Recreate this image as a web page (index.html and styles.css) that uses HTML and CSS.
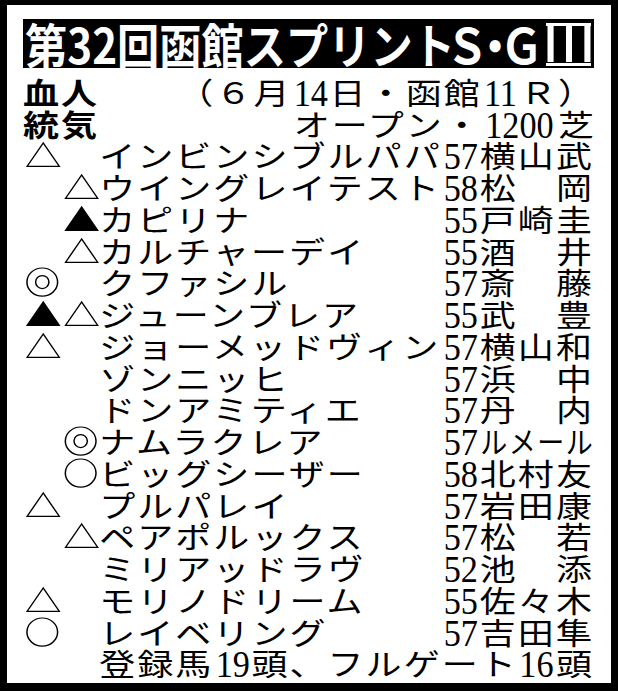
FILE: index.html
```html
<!DOCTYPE html>
<html lang="ja">
<head>
<meta charset="utf-8">
<title>第32回函館スプリントＳ・ＧⅢ</title>
<link rel="stylesheet" href="styles.css">
</head>
<body>
<div class="sheet">
  <div class="title"><span class="title-main"><span class="title-text">第32回函館スプリント</span></span><span class="tc tc-s">Ｓ</span><span class="tc tc-dot">・</span><span class="tc tc-g">Ｇ</span><span class="tc-roman"><span class="roman-glyph">Ⅲ</span></span></div>
  <div class="body">
    <div class="head">
      <span class="label">血人</span>
      <span class="info">（６月<span class="num">14</span>日・函館<span class="num">11</span>Ｒ）</span>
    </div>
    <div class="head">
      <span class="label">統気</span>
      <span class="info">オープン・<span class="num num-wide">1200</span>芝</span>
    </div>

    <div class="entry">
      <span class="mk"><svg viewBox="0 0 32 32"><path class="tri" d="M17 4 L3.5 27.5 L30.5 27.5 Z"/></svg></span>
      <span class="mk"></span>
      <span class="name">インビンシブルパパ</span>
      <span class="wt"><span class="num">57</span></span>
      <span class="jk">横山武</span>
    </div>
    <div class="entry">
      <span class="mk"></span>
      <span class="mk"><svg viewBox="0 0 32 32"><path class="tri" d="M17 4 L3.5 27.5 L30.5 27.5 Z"/></svg></span>
      <span class="name">ウイングレイテスト</span>
      <span class="wt"><span class="num">58</span></span>
      <span class="jk">松　岡</span>
    </div>
    <div class="entry">
      <span class="mk"></span>
      <span class="mk"><svg viewBox="0 0 32 32"><path class="tri-fill" d="M17 4 L3.5 27.5 L30.5 27.5 Z"/></svg></span>
      <span class="name">カピリナ</span>
      <span class="wt"><span class="num">55</span></span>
      <span class="jk">戸崎圭</span>
    </div>
    <div class="entry">
      <span class="mk"></span>
      <span class="mk"><svg viewBox="0 0 32 32"><path class="tri" d="M17 4 L3.5 27.5 L30.5 27.5 Z"/></svg></span>
      <span class="name">カルチャーデイ</span>
      <span class="wt"><span class="num">55</span></span>
      <span class="jk">酒　井</span>
    </div>
    <div class="entry">
      <span class="mk"><svg viewBox="0 0 32 32"><ellipse class="ring" cx="16.2" cy="16.2" rx="12.9" ry="14.2"/><ellipse class="ring" cx="16.2" cy="16.2" rx="5.6" ry="6.6"/></svg></span>
      <span class="mk"></span>
      <span class="name">クファシル</span>
      <span class="wt"><span class="num">57</span></span>
      <span class="jk">斎　藤</span>
    </div>
    <div class="entry">
      <span class="mk"><svg viewBox="0 0 32 32"><path class="tri-fill" d="M17 4 L3.5 27.5 L30.5 27.5 Z"/></svg></span>
      <span class="mk"><svg viewBox="0 0 32 32"><path class="tri" d="M17 4 L3.5 27.5 L30.5 27.5 Z"/></svg></span>
      <span class="name">ジューンブレア</span>
      <span class="wt"><span class="num">55</span></span>
      <span class="jk">武　豊</span>
    </div>
    <div class="entry">
      <span class="mk"><svg viewBox="0 0 32 32"><path class="tri" d="M17 4 L3.5 27.5 L30.5 27.5 Z"/></svg></span>
      <span class="mk"></span>
      <span class="name">ジョーメッドヴィン</span>
      <span class="wt"><span class="num">57</span></span>
      <span class="jk">横山和</span>
    </div>
    <div class="entry">
      <span class="mk"></span>
      <span class="mk"></span>
      <span class="name">ゾンニッヒ</span>
      <span class="wt"><span class="num">57</span></span>
      <span class="jk">浜　中</span>
    </div>
    <div class="entry">
      <span class="mk"></span>
      <span class="mk"></span>
      <span class="name">ドンアミティエ</span>
      <span class="wt"><span class="num">57</span></span>
      <span class="jk">丹　内</span>
    </div>
    <div class="entry">
      <span class="mk"></span>
      <span class="mk"><svg viewBox="0 0 32 32"><ellipse class="ring" cx="16.2" cy="16.2" rx="12.9" ry="14.2"/><ellipse class="ring" cx="16.2" cy="16.2" rx="5.6" ry="6.6"/></svg></span>
      <span class="name">ナムラクレア</span>
      <span class="wt"><span class="num">57</span></span>
      <span class="jk"><span class="squeeze">ルメール</span></span>
    </div>
    <div class="entry">
      <span class="mk"></span>
      <span class="mk"><svg viewBox="0 0 32 32"><ellipse class="ring" cx="16.2" cy="16.2" rx="12.9" ry="14.2"/></svg></span>
      <span class="name">ビッグシーザー</span>
      <span class="wt"><span class="num">58</span></span>
      <span class="jk">北村友</span>
    </div>
    <div class="entry">
      <span class="mk"><svg viewBox="0 0 32 32"><path class="tri" d="M17 4 L3.5 27.5 L30.5 27.5 Z"/></svg></span>
      <span class="mk"></span>
      <span class="name">プルパレイ</span>
      <span class="wt"><span class="num">57</span></span>
      <span class="jk">岩田康</span>
    </div>
    <div class="entry">
      <span class="mk"></span>
      <span class="mk"><svg viewBox="0 0 32 32"><path class="tri" d="M17 4 L3.5 27.5 L30.5 27.5 Z"/></svg></span>
      <span class="name">ペアポルックス</span>
      <span class="wt"><span class="num">57</span></span>
      <span class="jk">松　若</span>
    </div>
    <div class="entry">
      <span class="mk"></span>
      <span class="mk"></span>
      <span class="name">ミリアッドラヴ</span>
      <span class="wt"><span class="num">52</span></span>
      <span class="jk">池　添</span>
    </div>
    <div class="entry">
      <span class="mk"><svg viewBox="0 0 32 32"><path class="tri" d="M17 4 L3.5 27.5 L30.5 27.5 Z"/></svg></span>
      <span class="mk"></span>
      <span class="name">モリノドリーム</span>
      <span class="wt"><span class="num">55</span></span>
      <span class="jk">佐々木</span>
    </div>
    <div class="entry">
      <span class="mk"><svg viewBox="0 0 32 32"><ellipse class="ring" cx="16.2" cy="16.2" rx="12.9" ry="14.2"/></svg></span>
      <span class="mk"></span>
      <span class="name">レイベリング</span>
      <span class="wt"><span class="num">57</span></span>
      <span class="jk">吉田隼</span>
    </div>

    <div class="foot">登録馬<span class="num">19</span>頭、フルゲート<span class="num">16</span>頭</div>
  </div>
</div>
</body>
</html>
```

FILE: styles.css
```css
* {
  box-sizing: border-box;
}

html,
body {
  margin: 0;
  padding: 0;
  background: #fff;
}

.sheet {
  width: 618px;
  height: 691px;
  border-style: solid;
  border-color: #000;
  border-width: 5px 7px 8px 7px;
  padding: 14px 17px 0 16px;
  overflow: hidden;
  color: #000;
  font-family: "Noto Sans CJK JP", sans-serif;
}

/* black headline bar */
.title {
  height: 49px;
  background: #000;
  color: #fff;
  overflow: hidden;
  padding-left: 2px;
  font-family: "Noto Sans CJK JP", sans-serif;
  font-weight: 700;
  font-size: 48px;
  line-height: 49px;
  white-space: nowrap;
}

.title-main {
  display: inline-block;
  width: 425px;
}

.title-text {
  display: inline-block;
  transform: scaleX(0.88);
  transform-origin: left center;
}

/* trailing "Ｓ・ＧⅢ" set on fixed character boxes */
.tc {
  display: inline-flex;
  justify-content: center;
  transform: scaleX(0.9);
}

.tc-s {
  width: 34px;
}

.tc-dot {
  width: 22px;
}

.tc-g {
  width: 31px;
}

/* roman numeral with the printed top and bottom bars */
.tc-roman {
  display: inline-flex;
  justify-content: center;
  vertical-align: top;
  width: 45px;
  height: 43px;
  margin-top: 4px;
  margin-left: 9px;
  border-top: 3px solid #fff;
  border-bottom: 3px solid #fff;
  font-size: 50px;
  line-height: 29.4px;
  font-weight: 400;
}

.roman-glyph {
  display: inline-block;
  transform: scaleX(1.25);
}

/* table body: horizontally widened type, like the printed page */
.body {
  width: 475.83px;
  margin-top: 7.75px;
  transform: scaleX(1.2);
  transform-origin: left top;
  font-size: 30px;
  line-height: 31.75px;
  letter-spacing: 1.722px;
  white-space: nowrap;
}

.head {
  display: flex;
  justify-content: space-between;
  height: 31.75px;
}

.label {
  font-weight: 700;
}

.info {
  margin-right: -1.722px;
}

.entry {
  display: grid;
  grid-template-columns: minmax(0, 1fr) minmax(0, 1fr) minmax(0, 9fr) minmax(0, 1fr) minmax(0, 3fr);
  height: 31.75px;
}

.mk {
  height: 31.75px;
}

.mk svg {
  display: block;
  width: 31.72px;
  height: 31.75px;
  overflow: visible;
}

.tri,
.ring {
  fill: none;
  stroke: #000;
  stroke-width: 1.25;
}

.tri-fill {
  fill: #000;
  stroke: #000;
  stroke-width: 1.25;
}

.wt {
  display: flex;
  justify-content: center;
}

.num {
  display: inline-flex;
  justify-content: center;
  vertical-align: top;
  width: 31.72px;
  height: 31.75px;
  font-family: "Liberation Serif", "Times New Roman", serif;
  font-size: 38px;
  line-height: 31.75px;
  letter-spacing: 0;
  transform: translateY(2px) scaleX(0.75);
}

.num-wide {
  width: 63.44px;
}

.squeeze {
  display: inline-block;
  transform: scaleX(0.75);
  transform-origin: left center;
}

.foot {
  height: 31.75px;
  padding-left: 63.44px;
}
```
